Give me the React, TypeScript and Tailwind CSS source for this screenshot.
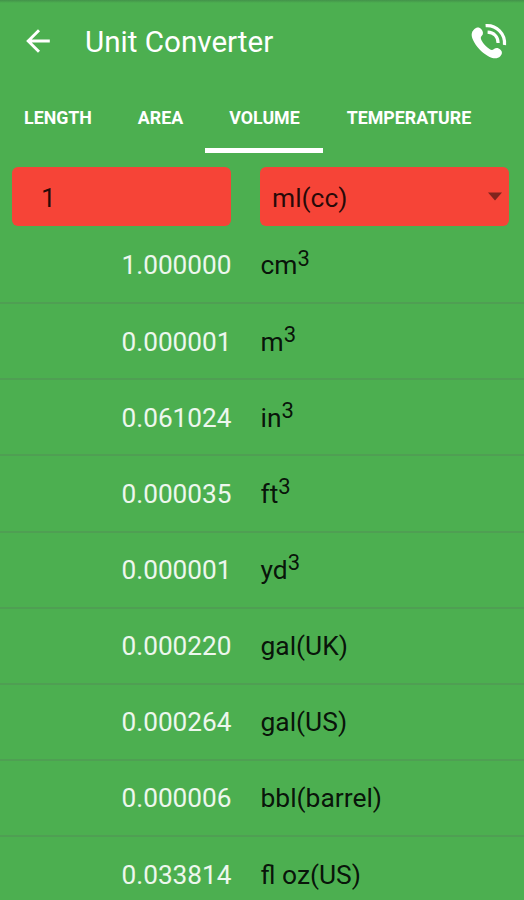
import React, { useState } from 'react';

interface Conversion {
    value: string;
    unit: string;
    power?: string;
}

const TABS = [
    { label: 'LENGTH', box: 'w-[115px]' },
    { label: 'AREA', box: 'w-[90px]' },
    { label: 'VOLUME', box: 'w-[118px]' },
    { label: 'TEMPERATURE', box: 'w-[171px]' },
];

const CONVERSIONS: Conversion[] = [
    { value: '1.000000', unit: 'cm', power: '3' },
    { value: '0.000001', unit: 'm', power: '3' },
    { value: '0.061024', unit: 'in', power: '3' },
    { value: '0.000035', unit: 'ft', power: '3' },
    { value: '0.000001', unit: 'yd', power: '3' },
    { value: '0.000220', unit: 'gal(UK)' },
    { value: '0.000264', unit: 'gal(US)' },
    { value: '0.000006', unit: 'bbl(barrel)' },
    { value: '0.033814', unit: 'fl oz(US)' },
];

const BackIcon = () => (
    <svg width="24" height="24" viewBox="0 0 24 24" fill="none" stroke="white" strokeWidth="2.9" className="mb-[2px]">
        <path d="M23.8 12H2.5M13 1.2L2.2 12L13 22.8" />
    </svg>
);

const CallIcon = () => (
    <svg width="38" height="38" viewBox="0 0 38 38">
        <path
            fill="white"
            d="M4.2 6.2C6.6 3.9 9.5 4 11.4 6.2C13.3 8.5 13.6 11 11.8 12.8C10.5 14.2 10.5 15.4 11.6 17.4C13.4 20.6 16.3 23.9 19.5 26C21.3 27.2 22.6 27.2 24 26C26 24.4 28.5 24.8 30.5 26.7C32.6 28.8 32.4 31 30.3 33.2C27.2 36.3 22.8 35.9 17.5 32.7C11.4 29 6.2 23.5 3.3 17.4C1.1 12.8 1 9.2 4.2 6.2Z"
        />
        <g fill="none" stroke="white" strokeWidth="3.2">
            <path d="M15.6 2.6C26.5 1.7 35.6 10.8 34.5 22" />
            <path d="M17.6 9.1C23.8 9.3 28.1 13.7 28.1 19.9" />
        </g>
    </svg>
);

const App = () => {
    const [activeTab, setActiveTab] = useState<string>('VOLUME');

    return (
        <div className="h-[900px] w-[524px] overflow-hidden bg-[#4caf50] font-[Roboto,sans-serif]">
            {/* Status bar edge */}
            <div className="h-[3px] bg-gradient-to-b from-[#43924a] to-[#4caf50]" />

            <header className="flex h-[77px] items-center pr-4 pl-[26px]">
                <BackIcon />
                <h1 className="ml-[35px] flex-1 pt-[2px] text-[29.6px] leading-none text-white">Unit Converter</h1>
                <CallIcon />
            </header>

            <nav className="flex h-[73px]">
                {TABS.map((tab) => (
                    <button
                        key={tab.label}
                        onClick={() => setActiveTab(tab.label)}
                        className={`flex items-center justify-center border-b-[5px] pt-[9px] pl-px text-[17.8px] font-bold text-white ${tab.box} ${
                            activeTab === tab.label ? 'border-white' : 'border-transparent'
                        }`}
                    >
                        {tab.label}
                    </button>
                ))}
            </nav>

            {/* Value and source unit */}
            <div className="flex gap-[29px] pt-[14px] pl-3 text-[26.4px] text-black/85">
                <div className="flex h-[59px] w-[219px] items-center rounded-[6px] bg-[#f64437] pt-[5px] pl-[29px]">1</div>
                <div className="flex h-[59px] w-[249px] items-center justify-between rounded-[6px] bg-[#f64437] pr-[7px] pl-3">
                    <span className="pt-[5px]">ml(cc)</span>
                    <svg width="14" height="9" viewBox="0 0 14 9">
                        <path d="M0 0.5H14L7 8.5Z" fill="#7f241d" />
                    </svg>
                </div>
            </div>

            <ul className="pt-[2px] text-[26.2px] leading-[30px]">
                {CONVERSIONS.map((row, index) => (
                    <li key={index} className="flex h-[76.15px] border-b-2 border-[#4f9f53] pt-[22.4px]">
                        <span className="w-[231.5px] text-right text-white/90">{row.value}</span>
                        <span className="ml-[29px] text-[26.4px] text-black/90">
                            {row.unit}
                            {row.power && <sup className="-top-[8.5px] align-baseline text-[22px] leading-none">{row.power}</sup>}
                        </span>
                    </li>
                ))}
            </ul>
        </div>
    );
};

export default App;
